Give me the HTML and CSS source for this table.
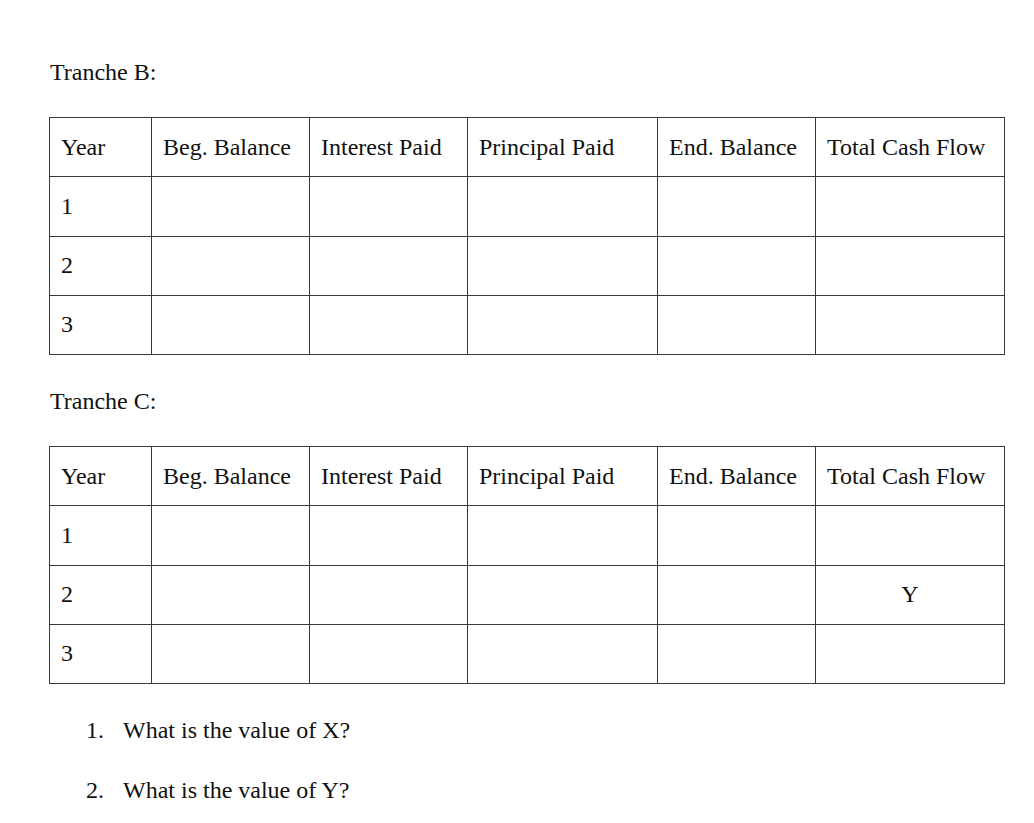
FILE: index.html
```html
<!DOCTYPE html>
<html>
<head>
<meta charset="utf-8">
<link rel="stylesheet" href="styles.css">
</head>
<body>
<div class="page">
  <p class="label">Tranche B:</p>
  <table class="grid">
    <colgroup>
      <col class="c1"><col class="c2"><col class="c3"><col class="c4"><col class="c5"><col class="c6">
    </colgroup>
    <tr><td>Year</td><td>Beg. Balance</td><td>Interest Paid</td><td>Principal Paid</td><td>End. Balance</td><td>Total Cash Flow</td></tr>
    <tr><td>1</td><td></td><td></td><td></td><td></td><td></td></tr>
    <tr><td>2</td><td></td><td></td><td></td><td></td><td></td></tr>
    <tr><td>3</td><td></td><td></td><td></td><td></td><td></td></tr>
  </table>
  <p class="label">Tranche C:</p>
  <table class="grid">
    <colgroup>
      <col class="c1"><col class="c2"><col class="c3"><col class="c4"><col class="c5"><col class="c6">
    </colgroup>
    <tr><td>Year</td><td>Beg. Balance</td><td>Interest Paid</td><td>Principal Paid</td><td>End. Balance</td><td>Total Cash Flow</td></tr>
    <tr><td>1</td><td></td><td></td><td></td><td></td><td></td></tr>
    <tr><td>2</td><td></td><td></td><td></td><td></td><td class="ctr">Y</td></tr>
    <tr><td>3</td><td></td><td></td><td></td><td></td><td></td></tr>
  </table>
  <div class="questions">
    <div class="q"><span class="num">1.</span><span>What is the value of X?</span></div>
    <div class="q"><span class="num">2.</span><span>What is the value of Y?</span></div>
  </div>
</div>
</body>
</html>
```
FILE: styles.css
```css
html, body {
  margin: 0;
  padding: 0;
  background: #ffffff;
}
body {
  font-family: "Liberation Serif", "Times New Roman", serif;
  font-size: 24px;
  line-height: 27px;
  color: #111111;
}
.page {
  padding: 59px 0 0 49px;
}
.label {
  margin: 0 0 31px 1px;
}
.grid {
  border-collapse: collapse;
  table-layout: fixed;
  width: 955px;
  margin-bottom: 33px;
}
.c1 { width: 102px; }
.c2 { width: 158px; }
.c3 { width: 158px; }
.c4 { width: 190px; }
.c5 { width: 158px; }
.c6 { width: 189px; }
.grid tr {
  height: 59.25px;
}
.grid td {
  border: 1px solid #3a3a3a;
  padding: 0 0 0 11px;
  vertical-align: middle;
  white-space: nowrap;
}
.grid td.ctr {
  text-align: center;
  padding: 0;
}
.questions {
  padding-left: 37px;
  display: flex;
  flex-direction: column;
  gap: 33px;
}
.q {
  display: flex;
}
.num {
  width: 37px;
}
```
